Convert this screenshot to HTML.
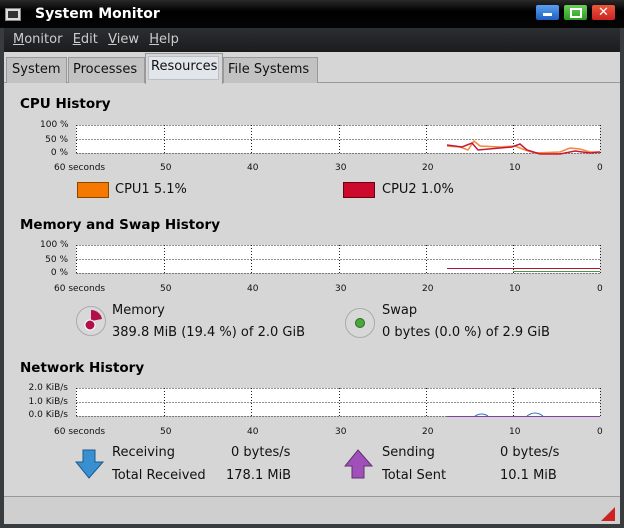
<!DOCTYPE html>
<html><head><meta charset="utf-8"><style>
body{margin:0;width:624px;height:528px;overflow:hidden;background:#383c3f;font-family:"DejaVu Sans","Liberation Sans",sans-serif;position:relative}
.a{position:absolute;white-space:nowrap}
.h{font-weight:bold;font-size:13.5px;color:#000}
.t{font-size:13px;color:#111}
.s{font-size:9px;color:#111}
</style></head><body>
<div class="a" style="left:0;top:0;width:624px;height:28px;background:linear-gradient(#2a2a2a,#000 40%,#050505)"></div>
<div class="a" style="left:5px;top:8px;width:14px;height:11px;background:#ddd;border:1px solid #888"><div style="margin:2px;width:10px;height:7px;background:#333"></div></div>
<div class="a" style="left:35px;top:6px;color:#fff;font-weight:bold;font-size:14px">System Monitor</div>
<div class="a" style="left:536px;top:5px;width:23px;height:15px;background:linear-gradient(#5aa0ee,#1d5fc4);border-radius:2px"><div style="position:absolute;left:7px;top:8px;width:9px;height:3px;background:#fff"></div></div>
<div class="a" style="left:564px;top:5px;width:23px;height:15px;background:linear-gradient(#6ccf5a,#2c9a22);border-radius:2px"><div style="position:absolute;left:6px;top:3px;width:8px;height:6px;border:2px solid #fff"></div></div>
<div class="a" style="left:592px;top:5px;width:23px;height:15px;background:linear-gradient(#e85a3a,#c22);border-radius:2px;color:#fff;font-weight:bold;font-size:13px;text-align:center;line-height:15px">✕</div>
<div class="a" style="left:4px;top:28px;width:616px;height:24px;background:linear-gradient(#2c2f31,#1a1c1e)"></div>
<div class="a" style="left:13px;top:32px;color:#ccc;font-size:13px;word-spacing:1px"><u>M</u>onitor &nbsp;<u>E</u>dit &nbsp;<u>V</u>iew &nbsp;<u>H</u>elp</div>
<div class="a" style="left:4px;top:52px;width:616px;height:472px;background:#d6d6d6"></div>
<div class="a" style="left:4px;top:82px;width:616px;height:1px;background:#999"></div>
<div class="a" style="left:6px;top:57px;width:59px;height:25px;background:#c2c2c2;border:1px solid #999;border-bottom:0"></div>
<div class="a" style="left:68px;top:57px;width:75px;height:25px;background:#c2c2c2;border:1px solid #999;border-bottom:0"></div>
<div class="a" style="left:145px;top:53px;width:76px;height:30px;background:#d6d6d6;border:1px solid #999;border-bottom:0"></div>
<div class="a" style="left:148px;top:56px;width:69px;height:22px;background:#e2e6ea;border:1px solid #b8c0c8"></div>
<div class="a" style="left:223px;top:57px;width:93px;height:25px;background:#c2c2c2;border:1px solid #999;border-bottom:0"></div>
<div class="a t" style="left:12px;top:62px;font-size:13px">System</div>
<div class="a t" style="left:73px;top:62px;font-size:13px">Processes</div>
<div class="a t" style="left:151px;top:59px;font-size:13px">Resources</div>
<div class="a t" style="left:228px;top:62px;font-size:13px">File Systems</div>
<div class="a" style="left:4px;top:496px;width:616px;height:1px;background:#999"></div>
<div class="a" style="left:4px;top:497px;width:616px;height:27px;background:#cfcfcf"></div>
<svg class="a" style="left:600px;top:506px" width="16" height="16"><path d="M15 1L15 15L1 15Z" fill="#c22"/></svg>

<div class="a h" style="left:20px;top:96px">CPU History</div>
<div class="a h" style="left:20px;top:217px">Memory and Swap History</div>
<div class="a h" style="left:20px;top:360px">Network History</div>

<svg class="a" style="left:0;top:0" width="624" height="528">
<g fill="#fff"><rect x="76" y="125" width="524" height="28"/><rect x="76" y="245" width="524" height="28"/><rect x="76" y="388" width="524" height="28"/></g>
<g stroke="#222" stroke-dasharray="1,2" stroke-width="1" fill="none">
<path d="M76.5 125.5H600 M76.5 139.5H600 M76.5 153.5H600 M76.5 125V154 M164.5 125V154 M251.5 125V154 M339.5 125V154 M426.5 125V154 M513.5 125V154 M600.5 125V154"/>
<path d="M76.5 245.5H600 M76.5 259.5H600 M76.5 273.5H600 M76.5 245V274 M164.5 245V274 M251.5 245V274 M339.5 245V274 M426.5 245V274 M513.5 245V274 M600.5 245V274"/>
<path d="M76.5 388.5H600 M76.5 402.5H600 M76.5 416.5H600 M76.5 388V417 M164.5 388V417 M251.5 388V417 M339.5 388V417 M426.5 388V417 M513.5 388V417 M600.5 388V417"/>
</g>
<path d="M447 146L460 147L468 150L474 141L480 146L500 147L515 146L525 150L535 153L560 152L570 148L580 149L590 152L600 152" stroke="#f28a3a" stroke-width="1.5" fill="none"/>
<path d="M447 145L462 147L472 143L478 150L500 148L512 147L520 144L527 150L540 154L560 154L575 151L590 153L600 152" stroke="#c8183a" stroke-width="1.5" fill="none"/>
<path d="M447 268.5H600" stroke="#b0104a"/><path d="M513 271.5H600" stroke="#4a9a3a"/>
<path d="M447 416.5H600" stroke="#8040a0"/><path d="M475 416Q482 412 488 416M527 416Q535 410 543 416" stroke="#3070c0" fill="none"/>
</svg>
<div class="a s" style="left:40px;top:120px;width:28px;text-align:right">100 %</div>
<div class="a s" style="left:40px;top:135px;width:28px;text-align:right">50 %</div>
<div class="a s" style="left:40px;top:148px;width:28px;text-align:right">0 %</div>
<div class="a s" style="left:40px;top:240px;width:28px;text-align:right">100 %</div>
<div class="a s" style="left:40px;top:255px;width:28px;text-align:right">50 %</div>
<div class="a s" style="left:40px;top:268px;width:28px;text-align:right">0 %</div>
<div class="a s" style="left:20px;top:383px;width:48px;text-align:right">2.0 KiB/s</div>
<div class="a s" style="left:20px;top:397px;width:48px;text-align:right">1.0 KiB/s</div>
<div class="a s" style="left:20px;top:410px;width:48px;text-align:right">0.0 KiB/s</div>
<div class="a s" style="left:54px;top:163px">60 seconds</div><div class="a s" style="left:160px;top:163px">50</div><div class="a s" style="left:247px;top:163px">40</div><div class="a s" style="left:335px;top:163px">30</div><div class="a s" style="left:422px;top:163px">20</div><div class="a s" style="left:509px;top:163px">10</div><div class="a s" style="left:597px;top:163px">0</div>
<div class="a s" style="left:54px;top:284px">60 seconds</div><div class="a s" style="left:160px;top:284px">50</div><div class="a s" style="left:247px;top:284px">40</div><div class="a s" style="left:335px;top:284px">30</div><div class="a s" style="left:422px;top:284px">20</div><div class="a s" style="left:509px;top:284px">10</div><div class="a s" style="left:597px;top:284px">0</div>
<div class="a s" style="left:54px;top:427px">60 seconds</div><div class="a s" style="left:160px;top:427px">50</div><div class="a s" style="left:247px;top:427px">40</div><div class="a s" style="left:335px;top:427px">30</div><div class="a s" style="left:422px;top:427px">20</div><div class="a s" style="left:509px;top:427px">10</div><div class="a s" style="left:597px;top:427px">0</div>

<div class="a" style="left:77px;top:182px;width:30px;height:14px;background:#f57900;border:1px solid #8a4500"></div>
<div class="a t" style="left:115px;top:182px">CPU1 5.1%</div>
<div class="a" style="left:343px;top:182px;width:30px;height:14px;background:#cc0a2e;border:1px solid #6a0010"></div>
<div class="a t" style="left:382px;top:182px">CPU2 1.0%</div>

<svg class="a" style="left:75px;top:305px" width="32" height="32"><circle cx="16" cy="16" r="14.5" fill="#d8d8d8" stroke="#aaa"/><path d="M16 16V5A11 11 0 0 1 27 14Z" fill="#b0104a"/><circle cx="15" cy="20" r="5" fill="#b0104a" stroke="#fff" stroke-width="1"/></svg>
<div class="a t" style="left:112px;top:303px">Memory</div>
<div class="a t" style="left:112px;top:325px">389.8 MiB (19.4 %) of 2.0 GiB</div>
<svg class="a" style="left:344px;top:307px" width="32" height="32"><circle cx="16" cy="16" r="14.5" fill="#d8d8d8" stroke="#aaa"/><circle cx="16" cy="16" r="4.5" fill="#4aa83a" stroke="#2a6a20"/></svg>
<div class="a t" style="left:382px;top:303px">Swap</div>
<div class="a t" style="left:382px;top:325px">0 bytes (0.0 %) of 2.9 GiB</div>

<svg class="a" style="left:75px;top:448px" width="30" height="32"><path d="M8 2H20V14H28L14 30L1 14H8Z" fill="#3a8fd0" stroke="#1a5a90"/></svg>
<div class="a t" style="left:112px;top:445px">Receiving</div>
<div class="a t" style="left:231px;top:445px">0 bytes/s</div>
<div class="a t" style="left:112px;top:468px">Total Received</div>
<div class="a t" style="left:226px;top:468px">178.1 MiB</div>
<svg class="a" style="left:344px;top:448px" width="30" height="32"><path d="M8 30H20V18H28L14 2L1 18H8Z" fill="#a050b8" stroke="#603070"/></svg>
<div class="a t" style="left:382px;top:445px">Sending</div>
<div class="a t" style="left:500px;top:445px">0 bytes/s</div>
<div class="a t" style="left:382px;top:468px">Total Sent</div>
<div class="a t" style="left:500px;top:468px">10.1 MiB</div>
</body></html>
